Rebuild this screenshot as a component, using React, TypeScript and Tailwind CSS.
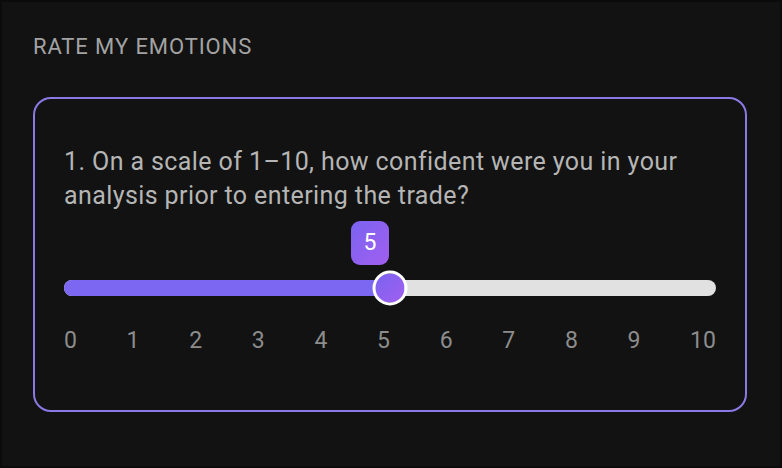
import React from "react";

export default function App() {
  const value = 5;
  const pct = (value / 10) * 100;
  const labels = [0, 1, 2, 3, 4, 5, 6, 7, 8, 9, 10];
  return (
    <div
      className="w-[782px] h-[468px] bg-[#121212] border-2 border-[#0b0b0b] pt-[31px] pl-[31px] pr-[33px]"
      style={{ fontFamily: "Roboto, 'Noto Sans', sans-serif" }}
    >
      <div className="text-[22px] leading-[28px] tracking-[0.9px] text-[#a3a3a3]">
        RATE MY EMOTIONS
      </div>
      <div className="mt-[36px] h-[315px] rounded-[18px] border-2 border-[#8a7ae6] px-[29px] pt-[46px]">
        <p className="text-[25px] leading-[34px] tracking-[0.4px] text-[#b5b5b5]">
          1. On a scale of 1–10, how confident were you in your analysis prior to entering the trade?
        </p>
        <div className="relative mt-[67px] h-[16px] rounded-full bg-[#e1e1e1]">
          <div
            className="h-full rounded-l-full bg-[#7b67f2]"
            style={{ width: `${pct}%` }}
          />
          <div
            className="absolute top-1/2 h-[35px] w-[35px] -translate-x-1/2 -translate-y-1/2 rounded-full border-[3.5px] border-white bg-gradient-to-br from-[#7a63f0] to-[#a15ef0]"
            style={{ left: `${pct}%` }}
          />
          <div
            className="absolute bottom-[31px] flex h-[44px] w-[38px] -translate-x-[39px] items-center justify-center rounded-[9px] bg-gradient-to-br from-[#7a63f0] to-[#a15ef0] text-[23px] text-white"
            style={{ left: `${pct}%` }}
          >
            {value}
          </div>
        </div>
        <div className="mt-[31px] flex justify-between text-[23px] leading-[28px] text-[#8c8c8c]">
          {labels.map((l) => (
            <span key={l}>{l}</span>
          ))}
        </div>
      </div>
    </div>
  );
}
